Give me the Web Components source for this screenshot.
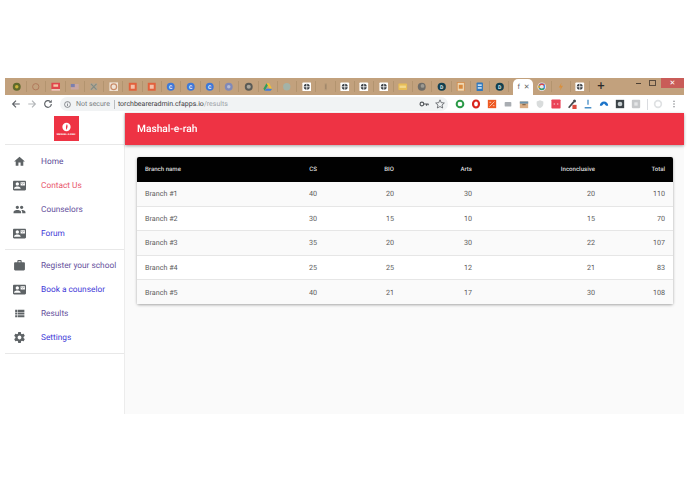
<!DOCTYPE html>
<html>
<head>
<meta charset="utf-8">
<title>Mashal-e-rah</title>
<style>
  html, body { margin: 0; background: #fff; }
  body { padding: 78px 11px 0 5px; font-family: Roboto, "Liberation Sans", sans-serif; text-rendering: geometricPrecision; }
  app-shell { height: 336px; }
</style>
</head>
<body>
<app-shell>
  <browser-frame slot="frame"></browser-frame>
  <side-nav slot="nav">
    <nav-item icon="home" color="#5b4a96">Home</nav-item>
    <nav-item icon="contact" color="#e8566c">Contact Us</nav-item>
    <nav-item icon="people" color="#65509c">Counselors</nav-item>
    <nav-item icon="contact" color="#3f3bd8">Forum</nav-item>
    <nav-divider></nav-divider>
    <nav-item icon="work" color="#65509c">Register your school</nav-item>
    <nav-item icon="contact" color="#3f3bd8">Book a counselor</nav-item>
    <nav-item icon="list" color="#65509c">Results</nav-item>
    <nav-item icon="settings" color="#3f3bd8">Settings</nav-item>
    <nav-divider></nav-divider>
  </side-nav>
  <app-header slot="header">Mashal-e-rah</app-header>
  <results-table slot="main"></results-table>
</app-shell>

<script>
// material icon paths used in the side menu
const NAV_ICONS = {
  home: 'M10 20v-6h4v6h5v-8h3L12 3 2 12h3v8z',
  contact: 'M21 8V7l-3 2-3-2v1l3 2 3-2zm1-5H2C.9 3 0 3.9 0 5v14c0 1.1.9 2 2 2h20c1.1 0 1.99-.9 1.99-2L24 5c0-1.1-.9-2-2-2zM8 6c1.66 0 3 1.34 3 3s-1.34 3-3 3-3-1.34-3-3 1.34-3 3-3zm6 12H2v-1c0-2 4-3.1 6-3.1s6 1.1 6 3.1v1zm8-6h-8V6h8v6z',
  people: 'M16 11c1.66 0 2.99-1.34 2.99-3S17.66 5 16 5c-1.66 0-3 1.34-3 3s1.34 3 3 3zm-8 0c1.66 0 2.99-1.34 2.99-3S9.66 5 8 5C6.34 5 5 6.34 5 8s1.34 3 3 3zm0 2c-2.33 0-7 1.17-7 3.5V19h14v-2.5c0-2.33-4.67-3.5-7-3.5zm8 0c-.29 0-.62.02-.97.05 1.16.84 1.97 1.97 1.97 3.45V19h6v-2.5c0-2.33-4.67-3.5-7-3.5z',
  work: 'M20 6h-4V4c0-1.11-.89-2-2-2h-4c-1.11 0-2 .89-2 2v2H4c-1.11 0-1.99.89-1.99 2L2 19c0 1.11.89 2 2 2h16c1.11 0 2-.89 2-2V8c0-1.11-.89-2-2-2zm-6 0h-4V4h4v2z',
  list: 'M4 14h4v-4H4v4zm0 5h4v-4H4v4zM4 9h4V5H4v4zm5 5h12v-4H9v4zm0 5h12v-4H9v4zM9 5v4h12V5H9z',
  settings: 'M19.43 12.98c.04-.32.07-.64.07-.98s-.03-.66-.07-.98l2.11-1.65c.19-.15.24-.42.12-.64l-2-3.46c-.12-.22-.39-.3-.61-.22l-2.49 1c-.52-.4-1.08-.73-1.69-.98l-.38-2.65C14.46 2.18 14.25 2 14 2h-4c-.25 0-.46.18-.49.42l-.38 2.65c-.61.25-1.17.59-1.69.98l-2.49-1c-.23-.09-.49 0-.61.22l-2 3.46c-.13.22-.07.49.12.64l2.11 1.65c-.04.32-.07.65-.07.98s.03.66.07.98l-2.11 1.65c-.19.15-.24.42-.12.64l2 3.46c.12.22.39.3.61.22l2.49-1c.52.4 1.08.73 1.69.98l.38 2.65c.03.24.24.42.49.42h4c.25 0 .46-.18.49-.42l.38-2.65c.61-.25 1.17-.59 1.69-.98l2.49 1c.23.09.49 0 .61-.22l2-3.46c.12-.22.07-.49-.12-.64l-2.11-1.65zM12 15.5c-1.93 0-3.5-1.57-3.5-3.5s1.57-3.5 3.5-3.5 3.5 1.57 3.5 3.5-1.57 3.5-3.5 3.5z'
};

// favicons of the background tabs, all on a 12x12 box
const disc = (fill, dot) => `<circle cx="6" cy="6" r="5" fill="${fill}"/><circle cx="6" cy="6" r="2.2" fill="${dot}"/>`;
const square = (fill, mark) => `<rect x="1" y="1" width="10" height="10" fill="${fill}"/><rect x="3.5" y="3.5" width="5" height="5" fill="${mark}"/>`;
const cross = `<rect x="0.5" y="0.5" width="11" height="11" rx="1" fill="#fff"/><circle cx="6" cy="6" r="3.8" fill="#3c4146"/><path d="M6 1.5v9M1.5 6h9" stroke="#fff" stroke-width="1"/>`;
const dark = `<circle cx="6" cy="6" r="5.2" fill="#123f4f"/><text x="6" y="8.4" font-size="6.5" font-weight="700" text-anchor="middle" fill="#dfe9ee" font-family="Roboto">D</text>`;
const blue = `<circle cx="6" cy="6" r="5" fill="#3e78d8"/><text x="6" y="8.4" font-size="6.5" font-weight="700" text-anchor="middle" fill="#fff" font-family="Roboto">C</text>`;
const TABS = [
  disc('#5f6a2c', '#c9b13c'), `<circle cx="6" cy="6" r="4" fill="none" stroke="#b0775a" stroke-width="1.2"/>`,
  `<rect x="0.5" y="1" width="11" height="10" fill="#e0454c"/><rect x="3" y="3" width="6" height="3" fill="#f3c7a8"/><rect x="0.5" y="9" width="11" height="2" fill="#eadcc8"/>`,
  `<rect x="1" y="2.5" width="10" height="7" fill="#c9a6a2"/><rect x="1" y="2.5" width="5" height="4" fill="#7b7fae"/>`,
  `<rect x="1.5" y="1.5" width="9" height="9" fill="#b5a48d"/><path d="M2.5 2.5l7 7M9.500 2.500l-7 7" stroke="#7f8b84" stroke-width="1.4"/>`,
  `<rect x="0.5" y="0.5" width="11" height="11" fill="#efe3d6"/><circle cx="6" cy="6" r="3.6" fill="none" stroke="#c98d6a" stroke-width="1.6"/>`,
  square('#e2603c', '#f3c0a8'), square('#e2603c', '#f3c0a8'),
  blue, blue, blue,
  `<circle cx="6" cy="6" r="5" fill="#8089b8"/><circle cx="6" cy="6" r="2.2" fill="#b4bbd4"/>`,
  `<circle cx="6" cy="6" r="5" fill="#5a5a55"/><circle cx="6" cy="6" r="2.6" fill="#a9a499"/>`,
  `<path d="M4.4 1.5h3.2L11.5 8.5 9.8 11z" fill="#f2c037"/><path d="M4.4 1.5L.5 8.5 2.2 11 6 4.3z" fill="#2f9e5b"/><path d="M2.2 11h7.6l1.7-2.5H4z" fill="#3f7be0"/>`,
  `<circle cx="6" cy="6" r="4.6" fill="#a3b3a8"/>`,
  cross,
  `<rect x="4.5" y="1.5" width="3" height="9" fill="#b59a78"/><rect x="5.2" y="3" width="1.6" height="6" fill="#a0846a"/>`,
  cross, cross, cross,
  `<rect x="0.5" y="2" width="11" height="8" rx="1" fill="#e8bd57"/><rect x="2" y="4.5" width="8" height="3" fill="#f2d88c"/>`,
  `<circle cx="6" cy="6" r="5" fill="#6e6c68"/><circle cx="7" cy="5" r="2.4" fill="#9d9a92"/>`,
  dark,
  `<rect x="1.5" y="0.5" width="9" height="11" fill="#efd9b4" stroke="#d38a4a"/><rect x="3.5" y="3.5" width="5" height="5" fill="#d8893e"/>`,
  `<rect x="2" y="0.5" width="8" height="11" rx="1" fill="#2f78bf"/><rect x="3.5" y="3" width="5" height="2" fill="#cfe3f3"/><rect x="3.5" y="6.5" width="5" height="2" fill="#cfe3f3"/>`,
  dark
];
const TABS_AFTER = [
  `<circle cx="6" cy="6" r="5.500" fill="#efe6dc"/><circle cx="6" cy="6" r="3.400" fill="none" stroke="#4a86e8" stroke-width="1.800"/><path d="M3.300 4a3.400 3.400 0 0 1 5.400 0" fill="none" stroke="#e8453c" stroke-width="1.800"/><path d="M3.300 8a3.400 3.400 0 0 0 5.400 0" fill="none" stroke="#34a853" stroke-width="1.800"/><path d="M2.900 4.500a3.400 3.400 0 0 0 0 3" fill="none" stroke="#f5b400" stroke-width="1.800"/>`,
  `<path d="M7 1L3.500 7h2.500L5 11l3.800-6.200H6.200z" fill="#d98f3c"/>`,
  cross
];

// toolbar extensions, 12x12 box again
const EXTENSIONS = [
  `<circle cx="6" cy="6" r="4" fill="none" stroke="#2c9a48" stroke-width="2.400"/>`,
  `<ellipse cx="6" cy="6" rx="3.600" ry="4.200" fill="none" stroke="#d9251c" stroke-width="2.600"/>`,
  `<rect x="1" y="1" width="10" height="10" fill="#ee5a24"/><path d="M3 9l6-6M3 4h2M7 8h2" stroke="#fbd6c4" stroke-width="1"/>`,
  `<rect x="2" y="3.500" width="8" height="5.500" rx="1" fill="#a9adb2"/>`,
  `<rect x="1" y="3" width="10" height="8" fill="#d9ad84"/><rect x="1" y="3" width="10" height="2.500" fill="#6d93ad"/><rect x="4" y="6" width="4" height="1.500" fill="#8a6a4c"/>`,
  `<path d="M6 1.500l4 1.500v3c0 2.500-2 4-4 4.800C4 10 2 8.500 2 6V3z" fill="#d9dcdc"/>`,
  `<rect x="0.500" y="0.500" width="11" height="11" rx="1" fill="#ea4256"/><circle cx="4" cy="6" r="1" fill="#f7b6bf"/><circle cx="8" cy="6" r="1" fill="#f7b6bf"/>`,
  `<path d="M2 10.500L8 3.500" stroke="#44484c" stroke-width="2"/><circle cx="9" cy="2.500" r="1.800" fill="#44484c"/><rect x="6.500" y="7" width="5" height="5" fill="#dc4b3e"/>`,
  `<path d="M6 1v6M2 10.500h8" stroke="#4a90c8" stroke-width="1.600"/>`,
  `<path d="M1 8a5 5 0 0 1 10 0l-2.500 0L6 5.500 3.500 8z" fill="#1c74c9"/>`,
  `<rect x="1" y="1" width="10" height="10" fill="#3c4448"/><circle cx="6" cy="6" r="2.800" fill="#c9d0d2"/>`,
  `<rect x="1" y="1" width="10" height="10" rx="1" fill="#c6c8ca"/><rect x="4" y="4" width="4" height="4" fill="#e5e6e7"/>`
];

class AppShell extends HTMLElement {
  constructor() {
    super();
    this.attachShadow({ mode: 'open' }).innerHTML = `
      <style>
        :host { display: flex; flex-direction: column; width: 679px; opacity: .999; filter: blur(.6px); }
        .body { flex: 1; display: grid; grid-template-columns: 120px 1fr; grid-template-rows: 32px 1fr; background: #fafafa; min-height: 0; }
        .nav { grid-row: 1 / 3; background: #fff; border-right: 1px solid #ececec; box-sizing: border-box; }
        .main { padding: 12px 11px 0 12px; }
      </style>
      <slot name="frame"></slot>
      <div class="body">
        <div class="nav"><slot name="nav"></slot></div>
        <slot name="header"></slot>
        <div class="main"><slot name="main"></slot></div>
      </div>`;
  }
}

class BrowserFrame extends HTMLElement {
  constructor() {
    super();
    const tab = svg => `<span class="tab"><svg viewBox="0 0 12 12">${svg}</svg></span>`;
    const ext = svg => `<span class="cell"><svg viewBox="0 0 12 12">${svg}</svg></span>`;
    this.attachShadow({ mode: 'open' }).innerHTML = `
      <style>
        :host { display: block; font-family: Roboto, "Liberation Sans", sans-serif; }
        .tabs { height: 17px; background: #c2a17d; display: flex; align-items: center; padding-left: 2.700px; box-sizing: border-box; }
        .tab { width: 19.300px; height: 11px; flex: none; display: flex; align-items: center; justify-content: center; border-right: 1px solid #b3946f; box-sizing: border-box; }
        .tab svg { width: 9.500px; height: 9.500px; }
        .active { flex: none; width: 20px; height: 16px; margin: 1px -1px 0 4px; align-self: flex-start; background: #fff; border-radius: 5px 5px 0 0; display: flex; align-items: center; gap: 4px; padding-left: 4px; box-sizing: border-box; font-size: 7px; color: #666; position: relative; }
        .plus { font-size: 13px; color: #2a2a2a; margin-left: 7px; line-height: 1; }
        .controls { margin-left: auto; align-self: flex-start; display: flex; height: 10px; align-items: center; }
        .min { width: 5px; height: 1px; background: #4d4033; margin-right: 8px; }
        .max { width: 5px; height: 4px; border: 1px solid #5a4c3e; margin-right: 5px; }
        .close { width: 23px; height: 10px; background: #c95c58; color: #fff; font-size: 7px; display: flex; align-items: center; justify-content: center; }
        .bar { height: 18px; background: #fff; display: flex; align-items: center; padding-left: 3px; }
        .cell { width: 16px; flex: none; display: flex; align-items: center; justify-content: center; }
        .cell svg { width: 10px; height: 10px; }
        .omni { width: 388px; height: 14px; margin: 0 4px; background: #f1f3f4; border-radius: 7px; display: flex; align-items: center; font-size: 7px; color: #7a7e82; padding-left: 4px; box-sizing: border-box; }
        .omni .info { width: 7px; height: 7px; margin-right: 5px; flex: none; }
        .omni .sep { width: 1px; height: 9px; background: #b9bcbf; margin: 0 3px 0 4px; }
        .omni b { font-weight: 400; color: #3c4043; }
        .omni i { font-style: normal; color: #a0a4a8; }
        .omni .right { margin-left: auto; display: flex; }
        .vsep { width: 1px; height: 11px; background: #dadce0; margin: 0 2px 0 3px; }
      </style>
      <div class="tabs">
        ${TABS.map(tab).join('')}
        <span class="active"><span>f</span><span>✕</span></span>
        ${TABS_AFTER.map(tab).join('')}
        <span class="plus">+</span>
        <span class="controls"><span class="min"></span><span class="max"></span><span class="close">✕</span></span>
      </div>
      <div class="bar">
        <span class="cell"><svg viewBox="0 0 12 12"><path d="M10.500 6h-8M6 2L2 6l4 4" fill="none" stroke="#5f6368" stroke-width="1.400"/></svg></span>
        <span class="cell"><svg viewBox="0 0 12 12"><path d="M1.500 6h8M6 2l4 4-4 4" fill="none" stroke="#b4b7ba" stroke-width="1.400"/></svg></span>
        <span class="cell"><svg viewBox="0 0 12 12"><path d="M10 6a4 4 0 1 1-1.200-2.900" fill="none" stroke="#5f6368" stroke-width="1.400"/><path d="M10.500 1v3.500H7z" fill="#5f6368"/></svg></span>
        <div class="omni">
          <svg class="info" viewBox="0 0 12 12"><circle cx="6" cy="6" r="5" fill="none" stroke="#5f6368" stroke-width="1.200"/><path d="M6 5.200v3.500M6 3v1.200" stroke="#5f6368" stroke-width="1.200"/></svg>
          <span>Not secure</span><span class="sep"></span><span><b>torchbeareradmin.cfapps.io</b><i>/results</i></span>
          <span class="right">
            <span class="cell"><svg viewBox="0 0 12 12"><circle cx="3.500" cy="6" r="2.200" fill="none" stroke="#55595d" stroke-width="1.400"/><path d="M5.500 6h6M9 6v2M11 6v1.500" stroke="#55595d" stroke-width="1.400"/></svg></span>
            <span class="cell"><svg viewBox="0 0 12 12"><path d="M6 1l1.500 3.400 3.700.4-2.800 2.400.8 3.600L6 9l-3.200 1.800.8-3.600L.8 4.800l3.700-.4z" fill="none" stroke="#5f6368" stroke-width="1"/></svg></span>
          </span>
        </div>
        ${EXTENSIONS.map(ext).join('')}
        <span class="vsep"></span>
        <span class="cell"><svg viewBox="0 0 12 12"><circle cx="6" cy="6" r="5" fill="#dfe1e3"/><circle cx="6" cy="6" r="3" fill="#fff"/></svg></span>
        <span class="cell"><svg viewBox="0 0 12 12"><path d="M6 2v1.400M6 5.300v1.400M6 8.600V10" stroke="#5f6368" stroke-width="1.500"/></svg></span>
      </div>`;
  }
}

class SideNav extends HTMLElement {
  constructor() {
    super();
    this.attachShadow({ mode: 'open' }).innerHTML = `
      <style>
        :host { display: block; }
        .logo { height: 32px; display: flex; justify-content: center; align-items: center; border-bottom: 1px solid #e8e8e8; box-sizing: border-box; padding-left: 3px; }
        .mark { width: 25px; height: 25px; background: #ee3344; display: flex; flex-direction: column; align-items: center; justify-content: center; gap: 1px; color: #fff; }
        .mark svg { width: 9px; height: 10px; }
        .mark span { font-size: 2.500px; line-height: 3px; font-weight: 700; white-space: nowrap; }
        .list { padding-top: 4px; }
      </style>
      <div class="logo"><div class="mark">
        <svg viewBox="0 0 10 10"><circle cx="5" cy="5" r="4.600" fill="#fff"/><path d="M5.500 1.800C6.800 4 6 6 5 8.200 4 6.500 4.200 4 5.500 1.800z" fill="#ee3344"/></svg>
        <span>MASHAL-E-RAH</span>
      </div></div>
      <div class="list"><slot></slot></div>`;
  }
}

class NavItem extends HTMLElement {
  constructor() {
    super();
    const d = NAV_ICONS[this.getAttribute('icon')];
    this.attachShadow({ mode: 'open' }).innerHTML = `
      <style>
        :host { display: flex; align-items: center; height: 24px; font-family: Roboto, "Liberation Sans", sans-serif; font-size: 8.300px; white-space: nowrap; }
        svg { width: 13px; height: 13px; margin-left: 8px; margin-right: 15px; flex: none; fill: #5e6366; }
        a { color: ${this.getAttribute('color')}; text-decoration: none; padding-top: 1px; }
      </style>
      <svg viewBox="0 0 24 24"><path d="${d}"/></svg>
      <a><slot></slot></a>`;
  }
}

class NavDivider extends HTMLElement {
  constructor() {
    super();
    this.attachShadow({ mode: 'open' }).innerHTML = `
      <style>:host { display: block; height: 1px; background: #e8e8e8; margin: 4px 0 3px; }</style>`;
  }
}

class AppHeader extends HTMLElement {
  constructor() {
    super();
    this.attachShadow({ mode: 'open' }).innerHTML = `
      <style>
        :host { display: flex; align-items: center; height: 32px; padding-left: 12px; background: #ee3344; color: #fff; font-size: 10.200px; font-weight: 500; font-family: Roboto, "Liberation Sans", sans-serif; box-shadow: 0 1px 3px rgba(0,0,0,.35); position: relative; }
      </style>
      <slot></slot>`;
  }
}

class ResultsTable extends HTMLElement {
  constructor() {
    super();
    const rows = [
      ['Branch #1', 40, 20, 30, 20, 110],
      ['Branch #2', 30, 15, 10, 15, 70],
      ['Branch #3', 35, 20, 30, 22, 107],
      ['Branch #4', 25, 25, 12, 21, 83],
      ['Branch #5', 40, 21, 17, 30, 108]
    ];
    const heads = ['Branch name', 'CS', 'BIO', 'Arts', 'Inconclusive', 'Total'];
    this.attachShadow({ mode: 'open' }).innerHTML = `
      <style>
        :host { display: block; font-family: Roboto, "Liberation Sans", sans-serif; background: #fff; border-radius: 2px; box-shadow: 0 1px 3px rgba(0,0,0,.35); }
        table { width: 100%; border-collapse: collapse; table-layout: fixed; }
        th, td { padding: 0 8px; text-align: right; white-space: nowrap; box-sizing: border-box; }
        th:first-child, td:first-child { text-align: left; }
        thead tr { height: 24.500px; background: #000; }
        th { color: #ddd; font-size: 6.100px; font-weight: 500; padding-top: 1px; }
        th:first-child { border-top-left-radius: 2px; }
        th:last-child { border-top-right-radius: 2px; }
        tbody tr { height: 24.500px; background: #fff; border-top: 1px solid #e6e6e6; }
        tbody tr:first-child { border-top: 0; }
        tbody tr:nth-child(odd) { background: #fafafa; }
        td { color: #5a5a5a; font-size: 7.200px; }
      </style>
      <table>
        <colgroup><col style="width:153px"><col style="width:35px"><col style="width:77px"><col style="width:78px"><col style="width:123px"><col style="width:70px"></colgroup>
        <thead><tr>${heads.map(h => `<th>${h}</th>`).join('')}</tr></thead>
        <tbody>${rows.map(r => `<tr>${r.map(c => `<td>${c}</td>`).join('')}</tr>`).join('')}</tbody>
      </table>`;
  }
}

customElements.define('app-shell', AppShell);
customElements.define('browser-frame', BrowserFrame);
customElements.define('side-nav', SideNav);
customElements.define('nav-item', NavItem);
customElements.define('nav-divider', NavDivider);
customElements.define('app-header', AppHeader);
customElements.define('results-table', ResultsTable);
</script>
</body>
</html>
